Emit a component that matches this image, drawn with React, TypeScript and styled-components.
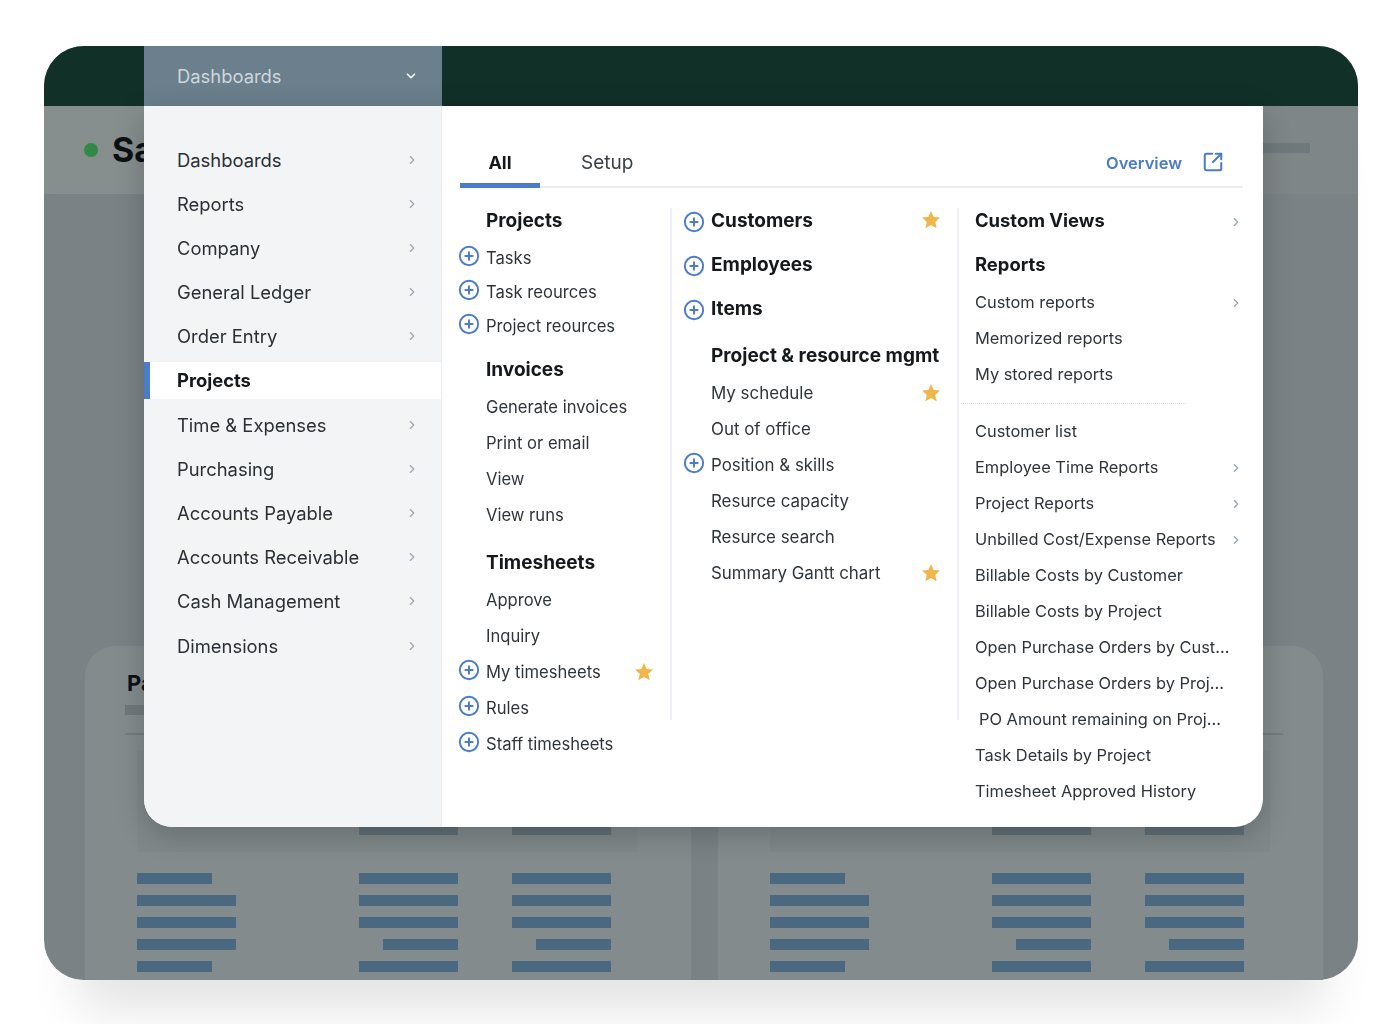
import React from "react";
import styled, { createGlobalStyle } from "styled-components";
import { ChevronDown, ChevronRight, CirclePlus, SquareArrowOutUpRight } from "lucide-react";

const Global = createGlobalStyle`
  html, body { margin: 0; background: #fff; height: 100%; overflow: hidden; }
  body { font-family: Inter, "Liberation Sans", sans-serif; }
`;

const Page = styled.div`
  box-sizing: border-box;
  width: 1388px;
  height: 1024px;
  padding: 46px 30px 44px 44px;
  filter: blur(0.7px);
`;

const Frame = styled.div`
  position: relative;
  height: 934px;
  display: flex;
  flex-direction: column;
  border-radius: 40px;
  background: #7a8286;
  box-shadow: 0 64px 50px -34px rgba(0, 0, 0, 0.11);
`;

const TopBar = styled.div`
  height: 60px;
  flex: none;
  background: #113027;
  border-radius: 40px 40px 0 0;
`;

const SubBar = styled.div`
  height: 88px;
  flex: none;
  box-sizing: border-box;
  padding: 0 48px 0 40px;
  display: flex;
  align-items: flex-start;
  justify-content: space-between;
  background: linear-gradient(90deg, #878e8e, #7f8688);
`;

const TitleWrap = styled.div`
  display: flex;
  align-items: center;
  gap: 14px;
  margin-top: 24px;
`;

const Dot = styled.span`
  width: 14px;
  height: 14px;
  border-radius: 50%;
  background: #2f8a45;
`;

const PageTitle = styled.span`
  font-size: 34px;
  font-weight: 700;
  color: #0d1114;
  line-height: 40px;
`;

const SubPill = styled.span`
  width: 100px;
  height: 10px;
  margin-top: 37px;
  background: #6f797c;
`;

const Cards = styled.div`
  flex: 1;
  box-sizing: border-box;
  padding: 452px 35px 0 41px;
  display: flex;
  gap: 27px;
`;

const Card = styled.div`
  flex: 1;
  box-sizing: border-box;
  padding: 24px 40px 8px;
  display: flex;
  flex-direction: column;
  background: #838b8d;
  border-radius: 30px 30px 0 0;
`;

const CardTitle = styled.div`
  height: 26px;
  padding-left: 2px;
  line-height: 26px;
  font-size: 22px;
  font-weight: 700;
  color: #0d1114;
`;

const CardSub = styled.div`
  width: 160px;
  height: 10px;
  margin-top: 9px;
  background: #6f797c;
`;

const CardRule = styled.div`
  height: 2px;
  margin-top: 18px;
  background: #737c7f;
`;

const TableHead = styled.div`
  width: 500px;
  height: 102px;
  margin: 15px 0 0 12px;
  box-sizing: border-box;
  padding-bottom: 17px;
  display: flex;
  align-items: flex-end;
  background: rgba(0, 0, 0, 0.02);
`;

const BarRow = styled.div`
  margin-left: 12px;
  display: flex;
  margin-top: 21px;
`;

const BarCol = styled.div`
  width: 99px;
  display: flex;
  flex-direction: column;
  gap: 11px;
  &:first-child { margin-right: 123px; }
  &:nth-child(2) { margin-right: 54px; }
`;

const Bar = styled.div<{ $w: number; $end?: boolean; $muted?: boolean }>`
  height: 11px;
  width: ${(p) => p.$w}px;
  align-self: ${(p) => (p.$end ? "flex-end" : "flex-start")};
  background: ${(p) => (p.$muted ? "#5f6f76" : "#4a6880")};
`;

const Menu = styled.div`
  position: absolute;
  left: 100px;
  top: 0;
  width: 1119px;
  height: 781px;
  display: flex;
  flex-direction: column;
`;

const SelectBox = styled.div`
  width: 298px;
  height: 60px;
  flex: none;
  box-sizing: border-box;
  padding: 0 24px 0 33px;
  display: flex;
  align-items: center;
  justify-content: space-between;
  background: #6b7f8c;
  color: #ced7dc;
  font-size: 18.4px;
  svg { color: #f2f5f6; }
`;

const MenuBody = styled.div`
  flex: 1;
  display: flex;
  background: #fff;
  border-radius: 0 0 28px 28px;
  box-shadow: 0 8px 30px rgba(0, 0, 0, 0.2);
  overflow: hidden;
`;

const Sidebar = styled.nav`
  width: 298px;
  flex: none;
  box-sizing: border-box;
  padding-top: 35px;
  background: #f3f4f6;
  border-right: 1px solid #e9edf0;
`;

const SideItem = styled.div<{ $active?: boolean }>`
  height: 37px;
  margin-bottom: 7.2px;
  box-sizing: border-box;
  padding: 0 22px 0 ${(p) => (p.$active ? 27 : 33)}px;
  display: flex;
  align-items: center;
  justify-content: space-between;
  font-size: 18.4px;
  font-weight: ${(p) => (p.$active ? 700 : 400)};
  color: ${(p) => (p.$active ? "#15191c" : "#2a3035")};
  background: ${(p) => (p.$active ? "#fff" : "transparent")};
  border-left: ${(p) => (p.$active ? "6px solid #4a7ccb" : "0")};
`;

const Chevron = styled(ChevronRight)`
  color: #98a6b2;
  flex: none;
`;

const Main = styled.div`
  flex: 1;
  box-sizing: border-box;
  padding: 0 20px 0 18px;
  display: flex;
  flex-direction: column;
`;

const TabBar = styled.div`
  height: 82px;
  flex: none;
  box-sizing: border-box;
  display: flex;
  align-items: flex-end;
  border-bottom: 2px solid #e9edf2;
`;

const Tab = styled.div<{ $active?: boolean }>`
  box-sizing: border-box;
  height: 40px;
  margin-bottom: -2px;
  line-height: 30px;
  text-align: center;
  font-size: ${(p) => (p.$active ? 18 : 19)}px;
  font-weight: ${(p) => (p.$active ? 700 : 400)};
  color: ${(p) => (p.$active ? "#15191c" : "#3a4045")};
  width: ${(p) => (p.$active ? "80px" : "auto")};
  margin-left: ${(p) => (p.$active ? 0 : 41)}px;
  border-bottom: ${(p) => (p.$active ? "5px solid #4a7ccb" : "0")};
`;

const Overview = styled.div`
  margin-left: auto;
  margin-right: 19px;
  height: 40px;
  display: flex;
  align-items: flex-start;
  gap: 20px;
  line-height: 34px;
  font-size: 16.5px;
  font-weight: 600;
  color: #4a7ccb;
  svg { margin-top: 5px; }
`;

const Columns = styled.div`
  display: flex;
  padding-top: 14px;
`;

const Col = styled.div<{ $w: number; $pad?: number; $fs: number; $headFs?: number }>`
  width: ${(p) => p.$w}px;
  flex: none;
  box-sizing: border-box;
  padding-left: ${(p) => p.$pad ?? 0}px;
  display: flex;
  flex-direction: column;
  font-size: ${(p) => p.$fs}px;
  --head-size: ${(p) => p.$headFs ?? 19}px;
`;

const Divider = styled.div`
  width: 2px;
  height: 512px;
  margin-top: 6px;
  flex: none;
  background: #eef1f5;
`;

const Row = styled.div<{ $h?: number; $mt?: number; $head?: boolean; $icon?: boolean; $nudge?: number }>`
  height: ${(p) => p.$h ?? 36}px;
  margin-top: ${(p) => p.$mt ?? 0}px;
  flex: none;
  display: flex;
  align-items: center;
  padding-left: ${(p) => (p.$icon ? 0 : 26) + (p.$nudge ?? 0)}px;
  padding-top: ${(p) => (p.$head ? 0 : 1)}px;
  box-sizing: border-box;
  font-size: ${(p) => (p.$head ? "var(--head-size)" : "inherit")};
  font-weight: ${(p) => (p.$head ? 700 : 400)};
  color: ${(p) => (p.$head ? "#15191c" : "#2f353a")};
  white-space: nowrap;
`;

const PlusSlot = styled.span<{ $head?: boolean }>`
  width: 28px;
  margin-left: -2px;
  flex: none;
  display: flex;
  align-items: center;
  margin-top: ${(p) => (p.$head ? 3 : -3)}px;
  svg { color: #4a7ccb; display: block; }
`;

const Trail = styled.span`
  margin-left: auto;
  display: flex;
  align-items: center;
`;

const StarIcon = styled.svg`
  width: 20px;
  height: 20px;
  display: block;
  margin-right: 16px;
`;

const ChevronTrail = styled(Trail)`
  margin-top: 3px;
`;

const DottedRule = styled.div`
  width: 225px;
  margin: 12px 0 8px -14px;
  border-top: 1px dotted #dfe3e7;
`;

const sideItems = [
  "Dashboards", "Reports", "Company", "General Ledger", "Order Entry", "Projects", "Time & Expenses",
  "Purchasing", "Accounts Payable", "Accounts Receivable", "Cash Management", "Dimensions",
];

type Item = { t: string; h?: number; mt?: number; head?: boolean; plus?: boolean; star?: boolean; chev?: boolean; nudge?: number };

const col1: Item[] = [
  { t: "Projects", head: true },
  { t: "Tasks", h: 34, mt: 2, plus: true },
  { t: "Task reources", h: 34, plus: true },
  { t: "Project reources", h: 34, plus: true },
  { t: "Invoices", head: true, mt: 9 },
  { t: "Generate invoices", mt: 1 },
  { t: "Print or email" },
  { t: "View" },
  { t: "View runs" },
  { t: "Timesheets", head: true, mt: 12 },
  { t: "Approve", mt: 1 },
  { t: "Inquiry" },
  { t: "My timesheets", plus: true, star: true },
  { t: "Rules", plus: true },
  { t: "Staff timesheets", plus: true },
];

const col2: Item[] = [
  { t: "Customers", head: true, plus: true, star: true },
  { t: "Employees", head: true, plus: true, mt: 8 },
  { t: "Items", head: true, plus: true, mt: 8 },
  { t: "Project & resource mgmt", head: true, mt: 11 },
  { t: "My schedule", mt: 1, star: true },
  { t: "Out of office" },
  { t: "Position & skills", plus: true },
  { t: "Resurce capacity" },
  { t: "Resurce search" },
  { t: "Summary Gantt chart", star: true },
];

const col3Top: Item[] = [
  { t: "Custom Views", head: true, chev: true },
  { t: "Reports", head: true, mt: 8 },
  { t: "Custom reports", mt: 1, chev: true },
  { t: "Memorized reports" },
  { t: "My stored reports" },
];

const col3Bottom: Item[] = [
  { t: "Customer list", h: 36.1 },
  { t: "Employee Time Reports", h: 36.1, chev: true },
  { t: "Project Reports", h: 36.1, chev: true },
  { t: "Unbilled Cost/Expense Reports", h: 36.1, chev: true },
  { t: "Billable Costs by Customer", h: 36.1 },
  { t: "Billable Costs by Project", h: 36.1 },
  { t: "Open Purchase Orders by Cust...", h: 36.1 },
  { t: "Open Purchase Orders by Proj...", h: 36.1 },
  { t: "PO Amount remaining on Proj...", h: 36.1, nudge: 4 },
  { t: "Task Details by Project", h: 36.1 },
  { t: "Timesheet Approved History", h: 36.1 },
];

const Star = () => (
  <StarIcon viewBox="0 0 20 20">
    <path fill="#f0b64a" d="M10 1l2.7 6 6.3.6-4.8 4.3 1.4 6.4L10 15l-5.6 3.3 1.4-6.4L1 7.6 7.3 7z" />
  </StarIcon>
);

const MenuRow = ({ item, flush }: { item: Item; flush?: boolean }) => (
  <Row
    $h={item.h}
    $mt={item.mt}
    $head={item.head}
    $icon={item.plus || flush}
    $nudge={item.nudge}
  >
    {item.plus && (
      <PlusSlot $head={item.head}>
        <CirclePlus size={22} strokeWidth={2.1} />
      </PlusSlot>
    )}
    {item.t}
    {item.star && (
      <Trail>
        <Star />
      </Trail>
    )}
    {item.chev && (
      <ChevronTrail>
        <Chevron size={14} strokeWidth={2} />
      </ChevronTrail>
    )}
  </Row>
);

const barsA = [
  [75, 99, 99, 99, 75],
  [99, 99, 99, 75, 99],
  [99, 99, 99, 75, 99],
];

const Table = () => (
  <>
    <TableHead>
      <BarCol />
      <BarCol><Bar $w={99} $end $muted /></BarCol>
      <BarCol><Bar $w={99} $end $muted /></BarCol>
    </TableHead>
    <BarRow>
      {barsA.map((col, i) => (
        <BarCol key={i}>
          {col.map((w, j) => (
            <Bar key={j} $w={w} $end={i > 0} />
          ))}
        </BarCol>
      ))}
    </BarRow>
  </>
);

export default function App() {
  return (
    <Page>
      <Global />
      <Frame>
        <TopBar />
        <SubBar>
          <TitleWrap>
            <Dot />
            <PageTitle>Sa</PageTitle>
          </TitleWrap>
          <SubPill />
        </SubBar>
        <Cards>
          <Card>
            <CardTitle>Pa</CardTitle>
            <CardSub />
            <CardRule />
            <Table />
          </Card>
          <Card>
            <CardTitle />
            <CardSub />
            <CardRule />
            <Table />
          </Card>
        </Cards>
        <Menu>
          <SelectBox>
            Dashboards
            <ChevronDown size={14} strokeWidth={3} />
          </SelectBox>
          <MenuBody>
            <Sidebar>
              {sideItems.map((s) => (
                <SideItem key={s} $active={s === "Projects"}>
                  {s}
                  {s !== "Projects" && <Chevron size={14} strokeWidth={2} />}
                </SideItem>
              ))}
            </Sidebar>
            <Main>
              <TabBar>
                <Tab $active>All</Tab>
                <Tab>Setup</Tab>
                <Overview>
                  Overview
                  <SquareArrowOutUpRight size={22} strokeWidth={2.2} />
                </Overview>
              </TabBar>
              <Columns>
                <Col $w={210} $fs={16.6}>
                  {col1.map((it) => <MenuRow key={it.t} item={it} />)}
                </Col>
                <Divider />
                <Col $w={285} $pad={13} $fs={16.9}>
                  {col2.map((it) => <MenuRow key={it.t} item={it} />)}
                </Col>
                <Divider />
                <Col $w={284} $pad={16} $fs={16.4} $headFs={18.4}>
                  {col3Top.map((it) => <MenuRow key={it.t} item={it} flush />)}
                  <DottedRule />
                  {col3Bottom.map((it) => <MenuRow key={it.t} item={it} flush />)}
                </Col>
              </Columns>
            </Main>
          </MenuBody>
        </Menu>
      </Frame>
    </Page>
  );
}
